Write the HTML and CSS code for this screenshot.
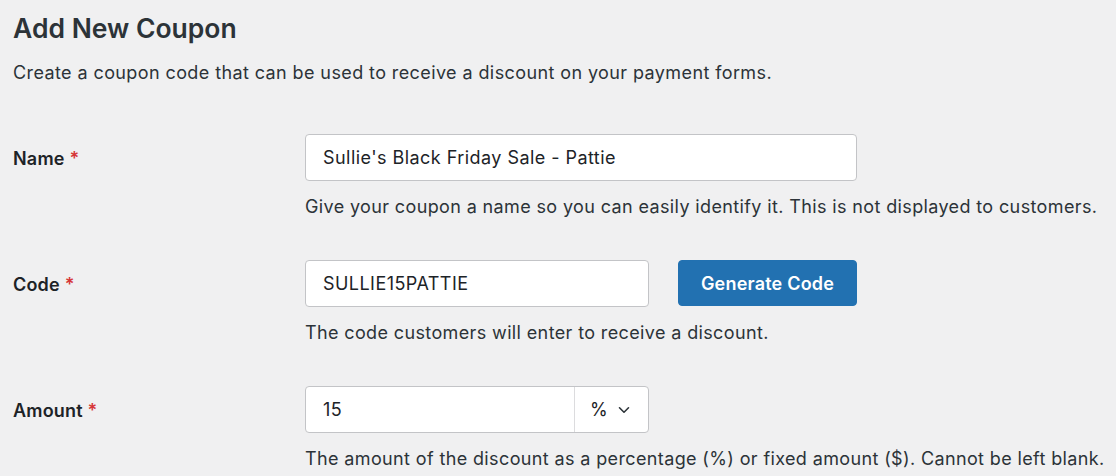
FILE: index.html
```html
<!DOCTYPE html>
<html>
<head>
<meta charset="utf-8">
<link rel="stylesheet" href="styles.css">
</head>
<body>
<div class="wrap">
  <h1 class="title">Add New Coupon</h1>
  <p class="intro">Create a coupon code that can be used to receive a discount on your payment forms.</p>
  <div class="form">
    <div class="row">
      <div class="label">Name <span class="req">*</span></div>
      <div class="field">
        <div class="input wide">Sullie's Black Friday Sale - Pattie</div>
        <p class="help">Give your coupon a name so you can easily identify it. This is not displayed to customers.</p>
      </div>
    </div>
    <div class="row">
      <div class="label">Code <span class="req">*</span></div>
      <div class="field">
        <div class="line">
          <div class="input narrow">SULLIE15PATTIE</div>
          <div class="button">Generate Code</div>
        </div>
        <p class="help">The code customers will enter to receive a discount.</p>
      </div>
    </div>
    <div class="row">
      <div class="label">Amount <span class="req">*</span></div>
      <div class="field">
        <div class="combo">
          <div class="combo-value">15</div>
          <div class="combo-select">%
            <svg class="chev" width="14" height="14" viewBox="0 0 14 14"><path d="M2.5 4.8 L7 9.2 L11.5 4.8" fill="none" stroke="#2c3338" stroke-width="1.6" stroke-linecap="round" stroke-linejoin="round"/></svg>
          </div>
        </div>
        <p class="help">The amount of the discount as a percentage (%) or fixed amount ($). Cannot be left blank.</p>
      </div>
    </div>
  </div>
</div>
</body>
</html>
```
FILE: styles.css
```css
html, body {
  margin: 0;
  padding: 0;
  background: #f0f0f1;
}
body {
  font-family: Inter, "Liberation Sans", sans-serif;
  color: #2c3338;
  font-size: 18px;
  letter-spacing: 0.4px;
}
.wrap {
  padding: 0 13px;
}
.title {
  margin: 0;
  padding-top: 11px;
  font-size: 26.5px;
  line-height: 34px;
  font-weight: 600;
  letter-spacing: 0;
  color: #2c3338;
}
.intro {
  margin: 16px 0 0 0;
  line-height: 24px;
}
.form {
  margin-top: 49px;
  display: flex;
  flex-direction: column;
  gap: 41px;
}
.row {
  display: grid;
  grid-template-columns: 292px 1fr;
}
.label {
  font-weight: 600;
  color: #1d2327;
  padding-top: 13px;
  line-height: 24px;
  letter-spacing: 0.2px;
}
.req {
  color: #d63638;
}
.field {
  display: flex;
  flex-direction: column;
}
.input {
  box-sizing: border-box;
  height: 47px;
  background: #fff;
  border: 1px solid #c3c4c7;
  border-radius: 4px;
  padding: 0 17px;
  display: flex;
  align-items: center;
  color: #1d2327;
  letter-spacing: 0.45px;
}
.wide { width: 552px; }
.narrow { width: 344px; }
.line {
  display: flex;
  gap: 29px;
}
.button {
  box-sizing: border-box;
  width: 179px;
  height: 46px;
  background: #2271b1;
  border: 1px solid #2271b1;
  border-radius: 4px;
  color: #fff;
  font-weight: 600;
  letter-spacing: 0.2px;
  display: flex;
  align-items: center;
  justify-content: center;
}
.help {
  margin: 14px 0 0 0;
  line-height: 24px;
  color: #2c3338;
  white-space: nowrap;
  letter-spacing: 0.37px;
}
.combo {
  box-sizing: border-box;
  width: 344px;
  height: 47px;
  background: #fff;
  border: 1px solid #c3c4c7;
  border-radius: 4px;
  display: flex;
}
.combo-value {
  flex: 1;
  display: flex;
  align-items: center;
  padding: 0 17px;
  color: #1d2327;
}
.combo-select {
  width: 74px;
  border-left: 1px solid #dcdcde;
  display: flex;
  align-items: center;
  padding-left: 15px;
  gap: 9px;
  box-sizing: border-box;
  color: #1d2327;
}
.chev { display: block; }
```
